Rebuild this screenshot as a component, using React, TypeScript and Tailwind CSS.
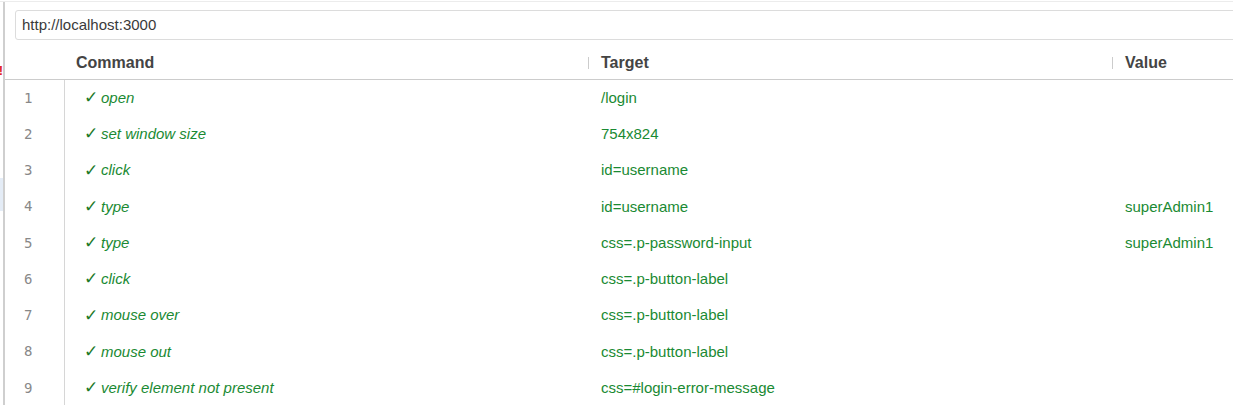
import React from "react";

const rows = [
  { n: 1, cmd: "open", target: "/login", value: "" },
  { n: 2, cmd: "set window size", target: "754x824", value: "" },
  { n: 3, cmd: "click", target: "id=username", value: "" },
  { n: 4, cmd: "type", target: "id=username", value: "superAdmin1" },
  { n: 5, cmd: "type", target: "css=.p-password-input", value: "superAdmin1" },
  { n: 6, cmd: "click", target: "css=.p-button-label", value: "" },
  { n: 7, cmd: "mouse over", target: "css=.p-button-label", value: "" },
  { n: 8, cmd: "mouse out", target: "css=.p-button-label", value: "" },
  { n: 9, cmd: "verify element not present", target: "css=#login-error-message", value: "" },
];

export default function App() {
  return (
    <div
      className="w-[1233px] h-[405px] bg-white overflow-hidden flex flex-col"
      style={{ fontFamily: '"Liberation Sans", Arial, sans-serif' }}
    >
      <div className="h-[2px] shrink-0 border-b border-[#ececec]" />
      <div className="flex flex-1 min-h-0">
        {/* left sliver */}
        <div className="w-[3px] shrink-0 flex flex-col overflow-hidden">
          <div className="h-[64px]" />
          <div className="h-[12px] relative">
            <span className="absolute right-0 top-[-2px] text-[13px] leading-[14px] font-bold text-[#e02020] whitespace-nowrap">e!</span>
          </div>
          <div className="h-[100px]" />
          <div className="h-[33px] bg-[#e4ecf6]" />
        </div>
        <div className="w-[2px] shrink-0 bg-[#cfcfcf]" />
        {/* main */}
        <div className="flex-1 min-w-0 flex flex-col">
          <div className="h-[38px] pt-[8px] pl-[10px] shrink-0">
            <div className="w-[1240px] h-[30px] border border-[#dcdcdc] rounded-[3px] flex items-center pl-[6px] text-[15px] text-[#3a3a3a]">
              http://localhost:3000
            </div>
          </div>
          {/* header */}
          <div className="h-[40px] shrink-0 flex border-b border-[#cccccc] text-[16px] font-bold text-[#444]">
            <div className="w-[60px] shrink-0" />
            <div className="w-[523px] shrink-0 pl-[11px] pt-[14px] leading-[18px]">Command</div>
            <div className="w-[524px] shrink-0 relative pl-[13px] pt-[14px] leading-[18px]">
              <span className="absolute left-0 top-[17px] h-[12px] w-px bg-[#cccccc]" />
              Target
            </div>
            <div className="flex-1 relative pl-[13px] pt-[14px] leading-[18px]">
              <span className="absolute left-0 top-[17px] h-[12px] w-px bg-[#cccccc]" />
              Value
            </div>
          </div>
          {/* rows */}
          <div className="flex flex-col">
            {rows.map((r) => (
              <div key={r.n} className="h-[36.25px] shrink-0 flex items-center text-[15px]">
                <div
                  className="w-[60px] h-full shrink-0 border-r border-[#d6d6d6] flex items-center pl-[19px] text-[14px] text-[#888]"
                  style={{ fontFamily: '"DejaVu Sans Mono", monospace' }}
                >
                  {r.n}
                </div>
                <div className="w-[523px] shrink-0 pl-[19px] flex items-center italic text-[#1a8a33]">
                  <span className="not-italic text-[#1d7a28] text-[17px] leading-[14px] mr-[3px]">✓</span>
                  <span>{r.cmd}</span>
                </div>
                <div className="w-[524px] shrink-0 pl-[13px] text-[#1a8a33]">{r.target}</div>
                <div className="flex-1 pl-[13px] text-[#1a8a33] whitespace-nowrap">{r.value}</div>
              </div>
            ))}
          </div>
        </div>
      </div>
    </div>
  );
}
